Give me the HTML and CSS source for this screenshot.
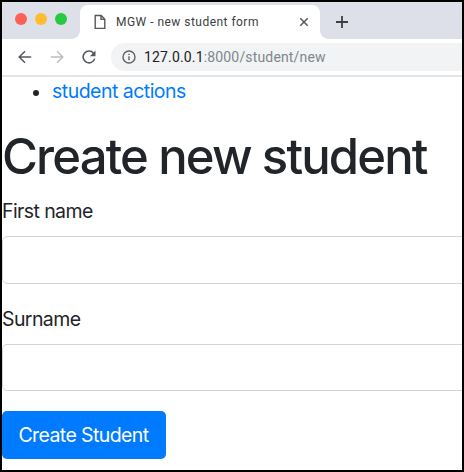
FILE: index.html
```html
<!DOCTYPE html>
<html lang="en">
<head>
<meta charset="utf-8">
<title>MGW - new student form</title>
<link rel="stylesheet" href="styles.css">
</head>
<body>
<div class="window">
  <header class="tab-strip">
    <div class="lights">
      <span class="light red"></span><span class="light yellow"></span><span class="light green"></span>
    </div>
    <div class="tab">
      <svg class="doc" width="12" height="16" viewBox="0 0 12 16" fill="none" stroke="#55585c" stroke-width="1.4"><path d="M1.2 1.5h6l3.6 3.7v9.2H1.2zM7 1.7v3.7h3.6"/></svg>
      <span class="tab-title">MGW - new student form</span>
      <svg class="close" width="10" height="10" viewBox="0 0 10 10" stroke="#55585c" stroke-width="1.5"><path d="M1.3 1.3l7.4 7.4M8.7 1.3L1.3 8.7"/></svg>
    </div>
    <svg class="plus" width="12" height="12" viewBox="0 0 12 12" stroke="#3c4043" stroke-width="1.8"><path d="M6 0v12M0 6h12"/></svg>
  </header>
  <nav class="toolbar">
    <svg class="nav-icon" width="14" height="14" viewBox="0 0 14 14" fill="none" stroke="#55595e" stroke-width="1.5"><path d="M13.2 7H1.5M7 1.2L1.2 7 7 12.8"/></svg>
    <svg class="nav-icon" width="14" height="14" viewBox="0 0 14 14" fill="none" stroke="#bcbec0" stroke-width="1.5"><path d="M.8 7h11.7M7 1.2L12.8 7 7 12.8"/></svg>
    <svg class="nav-icon" width="14" height="14" viewBox="0 0 14 14"><path d="M11.6 3.2A5.9 5.9 0 1 0 12.7 8.6" fill="none" stroke="#55595e" stroke-width="1.6"/><path d="M13.5.6v5.6H7.9z" fill="#55595e"/></svg>
    <div class="address">
      <svg width="14" height="14" viewBox="0 0 14 14" fill="none" stroke="#5f6368" stroke-width="1.4"><circle cx="7" cy="7" r="6"/><path d="M7 6.2v4M7 3.7v1.4"/></svg>
      <span class="url"><b>127.0.0.1</b>:8000/student/new</span>
    </div>
  </nav>
  <main class="page">
    <ul class="menu"><li><a class="link">student actions</a></li></ul>
    <h1 class="heading">Create new student</h1>
    <form class="form">
      <label class="label first" for="first">First name</label>
      <input class="field" id="first" type="text">
      <label class="label last" for="last">Surname</label>
      <input class="field short" id="last" type="text">
      <button class="submit" type="button">Create Student</button>
    </form>
  </main>
</div>
</body>
</html>
```

FILE: styles.css
```css
* { box-sizing: border-box; }
body { margin: 0; background: #000; font-family: Inter, "Liberation Sans", sans-serif; color: #212529; }
svg { display: block; flex: none; }
.window { width: 464px; height: 472px; border: 2px solid #000; background: #fff; overflow: hidden; }
.tab-strip { height: 37px; display: flex; background: #dde0e8; }
.lights { width: 78px; padding: 11px 0 0 13px; display: flex; gap: 8px; }
.light { width: 12px; height: 12px; border-radius: 50%; }
.red { background: #ff5f57; }
.yellow { background: #febc2e; }
.green { background: #28c840; }
.tab { position: relative; width: 240px; height: 34px; margin-top: 3px; display: flex; align-items: center; padding: 0 11px 0 14px; background: #fff; border-radius: 8px 8px 0 0; }
.tab::before, .tab::after { content: ""; position: absolute; bottom: 0; width: 8px; height: 8px; }
.tab::before { left: -8px; background: radial-gradient(circle at 0 0, transparent 7.5px, #fff 8px); }
.tab::after { right: -8px; background: radial-gradient(circle at 100% 0, transparent 7.5px, #fff 8px); }
.tab-title { flex: 1; margin-left: 10px; font: 12px/16px Roboto, sans-serif; letter-spacing: .47px; color: #3c4043; white-space: nowrap; }
.plus { margin: 14px 0 0 16px; }
.toolbar { height: 38px; display: flex; align-items: center; gap: 18px; padding: 0 0 0 16px; border-bottom: 2px solid #e4e4e4; }
.address { flex: 1; height: 28px; margin-left: -3px; padding-left: 11px; display: flex; align-items: center; gap: 8px; background: #f1f3f4; border-radius: 14px 0 0 14px; }
.url { font: 14px/20px Roboto, sans-serif; letter-spacing: .16px; color: #80868b; white-space: nowrap; }
.url b { font-weight: 400; color: #202124; }
.page { width: 470px; }
.menu { height: 30px; margin: 0; padding: 0 0 0 50px; font-size: 19.5px; line-height: 28px; list-style: none; }
.menu li { display: flex; align-items: center; }
.menu li::before { content: ""; width: 6px; height: 6px; margin: 3px 13px 0 -19px; border-radius: 50%; background: #212529; }
.link { color: #007bff; letter-spacing: -.52px; }
.heading { margin: 20px 0 0; height: 60px; font-size: 49px; line-height: 60px; font-weight: 500; letter-spacing: -1.85px; white-space: nowrap; }
.form { display: flex; flex-direction: column; align-items: flex-start; }
.label { height: 30px; font-size: 19.5px; line-height: 30px; letter-spacing: -.6px; }
.first { margin: 9px 0 10px; }
.last { margin: 20px 0 10px; }
.field { width: 470px; height: 48px; border: 1px solid #ced4da; border-radius: 5px; background: #fff; }
.short { height: 47px; }
.submit { width: 164px; height: 48px; margin-top: 20px; padding: 0 1px 0 0; border: 0; border-radius: 5px; background: #007bff; color: #fff; font: 19.5px/48px Inter, sans-serif; letter-spacing: -.6px; white-space: nowrap; }
```
